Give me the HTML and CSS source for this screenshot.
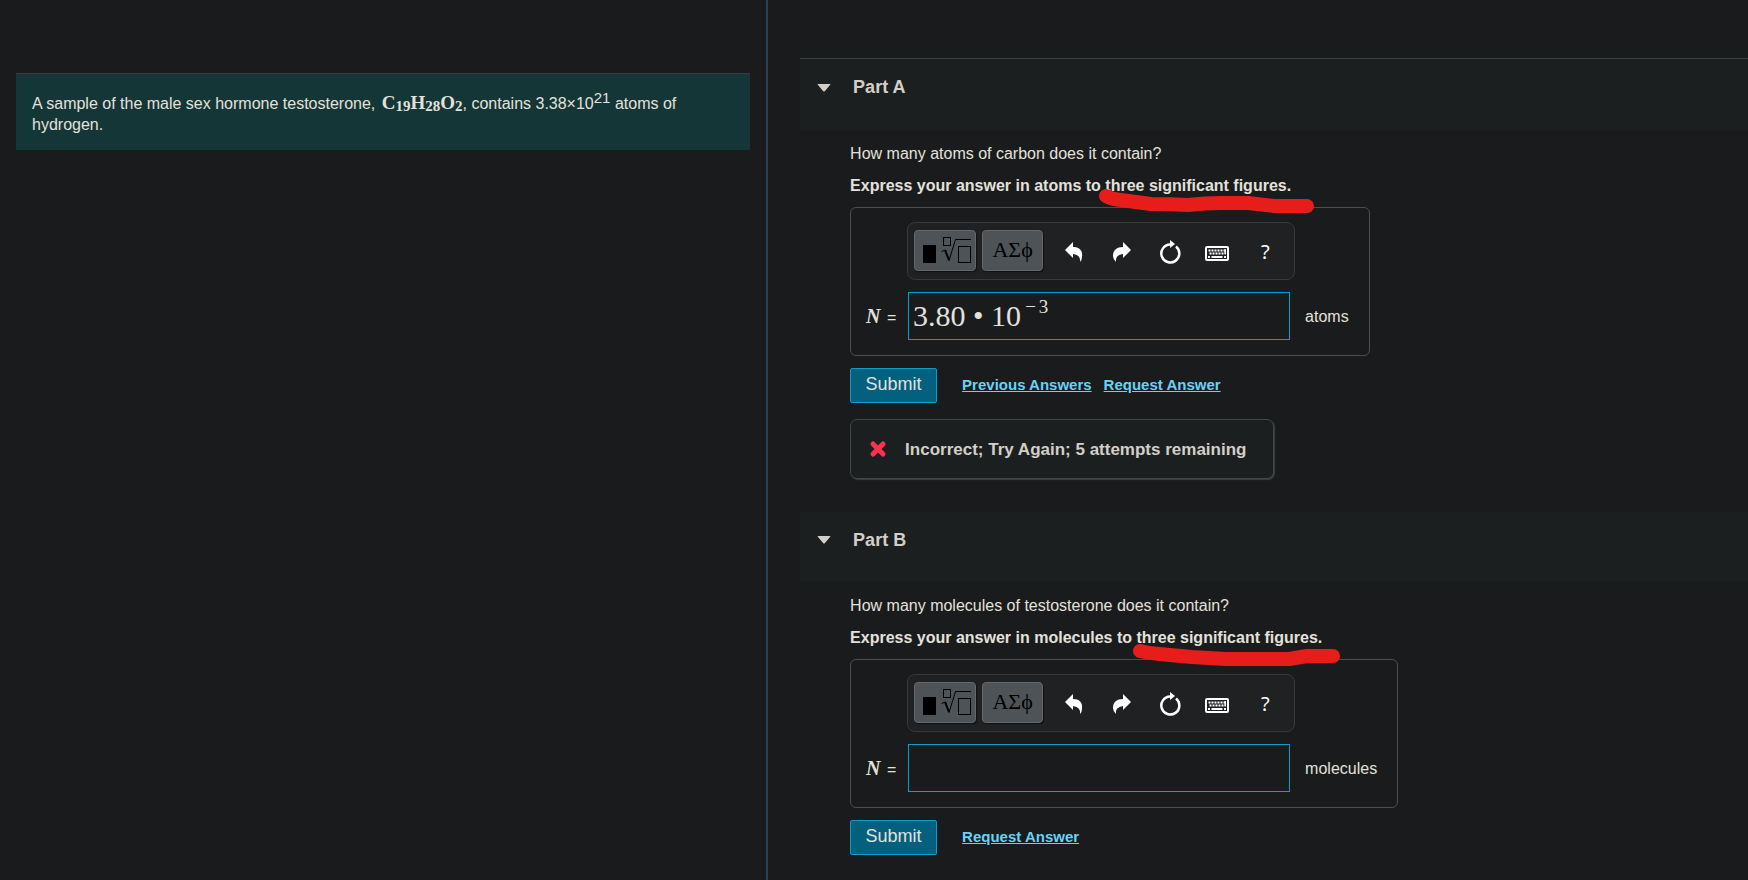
FILE: index.html
```html
<!DOCTYPE html>
<html lang="en">
<head>
  <meta charset="UTF-8" />
  <meta name="viewport" content="width=device-width, initial-scale=1.0"/>
  <title>Testosterone atoms</title>
  <link rel="stylesheet" href="styles.css">
</head>
<body>
  <!-- shared icons -->
  <svg class="icon-defs" aria-hidden="true">
    <symbol id="icon-template" viewBox="0 0 52 30">
      <rect x="4" y="10" width="13" height="18" fill="#000"/>
      <g fill="none" stroke="#000">
        <rect x="24.5" y="2.500" width="7" height="8"/>
        <path d="M22.500 16.500L26.500 15L30 25.500L36.500 4.500H52"/>
        <path d="M26 15L30 25" stroke-width="2"/>
        <rect x="39.500" y="11.500" width="12" height="16"/>
      </g>
    </symbol>
    <symbol id="icon-undo" viewBox="0 0 18 20">
      <path d="M0 8L8 0V5C14 5 18 8 17 15Q17 18 15 20Q16 13 8 12V16Z"/>
    </symbol>
    <symbol id="icon-redo" viewBox="0 0 18 20">
      <path d="M18 8L10 0V5C4 5 0 8 0 14Q0 17 3 20Q2 13 10 12V16Z"/>
    </symbol>
    <symbol id="icon-reset" viewBox="0 0 22 24">
      <path d="M11 4.500A9 9 0 1 0 17 6.500" fill="none" stroke="#fff" stroke-width="2.500"/>
      <path d="M11 0L16 4L11 8Z"/>
    </symbol>
    <symbol id="icon-keyboard" viewBox="0 0 24 15">
      <rect x="1" y="1" width="22" height="13" rx="1" fill="none" stroke="#fff" stroke-width="2"/>
      <path d="M3.500 4.500H20M4.500 7.500H21" fill="none" stroke="#fff" stroke-width="2" stroke-dasharray="2 1"/>
      <path d="M3 10H5V12H3ZM6.500 10H17.500V12H6.500ZM19 10H21V12H19ZM19.500 3H21V8H19.500Z"/>
    </symbol>
  </svg>

  <div class="page">
    <aside class="intro">
      <p class="problem">A sample of the male sex hormone testosterone, <span class="formula">C<sub>19</sub>H<sub>28</sub>O<sub>2</sub></span>, contains 3.38×10<sup>21</sup> atoms of hydrogen.</p>
    </aside>

    <main class="parts">
      <section class="part">
        <header class="part-header">
          <svg class="caret" viewBox="0 0 14 8"><path d="M1 0H13Q14 0 13 1L8 7Q7 8 6 7L1 1Q0 0 1 0Z"/></svg>
          <h2>Part A</h2>
        </header>
        <div class="part-body">
          <p>How many atoms of carbon does it contain?</p>
          <p class="instruction">Express your answer in atoms to <span class="marked">three significant figures.<svg class="marker" viewBox="0 0 230 32"><path d="M11 12Q16 15 26 16L56 20Q75 20 93 21Q110 19 126 19H153L179 22H212"/></svg></span></p>
          <form class="answer">
            <div class="toolbar">
              <button type="button" class="key" aria-label="Templates"><svg class="template"><use href="#icon-template"/></svg></button>
              <button type="button" class="key">ΑΣϕ</button>
              <button type="button" class="tool" aria-label="Undo"><svg class="arrow"><use href="#icon-undo"/></svg></button>
              <button type="button" class="tool" aria-label="Redo"><svg class="arrow"><use href="#icon-redo"/></svg></button>
              <button type="button" class="tool" aria-label="Reset"><svg class="reset"><use href="#icon-reset"/></svg></button>
              <button type="button" class="tool" aria-label="Keyboard shortcuts"><svg class="keyboard"><use href="#icon-keyboard"/></svg></button>
              <button type="button" class="tool">?</button>
            </div>
            <label for="answerA"><i>N</i> =</label>
            <div class="field">
              <input type="text" id="answerA" />
              <span class="math">3.80 • 10<sup><span class="sign">−</span>3</sup></span>
            </div>
            <span class="unit">atoms</span>
          </form>
          <div class="actions">
            <button type="button" class="submit">Submit</button>
            <a href="#">Previous Answers</a>
            <a href="#">Request Answer</a>
          </div>
          <div class="feedback">
            <svg class="cross" viewBox="0 0 18 18"><path d="M4 4L14 14M14 4L4 14"/></svg>
            Incorrect; Try Again; 5 attempts remaining
          </div>
        </div>
      </section>

      <section class="part">
        <header class="part-header">
          <svg class="caret" viewBox="0 0 14 8"><path d="M1 0H13Q14 0 13 1L8 7Q7 8 6 7L1 1Q0 0 1 0Z"/></svg>
          <h2>Part B</h2>
        </header>
        <div class="part-body">
          <p>How many molecules of testosterone does it contain?</p>
          <p class="instruction">Express your answer in molecules to <span class="marked">three significant figures.<svg class="marker" viewBox="0 0 230 32"><path d="M14 15Q22 17 33 18L66 21L100 23H163L181 20H207"/></svg></span></p>
          <form class="answer">
            <div class="toolbar">
              <button type="button" class="key" aria-label="Templates"><svg class="template"><use href="#icon-template"/></svg></button>
              <button type="button" class="key">ΑΣϕ</button>
              <button type="button" class="tool" aria-label="Undo"><svg class="arrow"><use href="#icon-undo"/></svg></button>
              <button type="button" class="tool" aria-label="Redo"><svg class="arrow"><use href="#icon-redo"/></svg></button>
              <button type="button" class="tool" aria-label="Reset"><svg class="reset"><use href="#icon-reset"/></svg></button>
              <button type="button" class="tool" aria-label="Keyboard shortcuts"><svg class="keyboard"><use href="#icon-keyboard"/></svg></button>
              <button type="button" class="tool">?</button>
            </div>
            <label for="answerB"><i>N</i> =</label>
            <div class="field">
              <input type="text" id="answerB" />
            </div>
            <span class="unit">molecules</span>
          </form>
          <div class="actions">
            <button type="button" class="submit">Submit</button>
            <a href="#">Request Answer</a>
          </div>
        </div>
      </section>
    </main>
  </div>
</body>
</html>
```

FILE: styles.css
```css
* {
  box-sizing: border-box;
}
body {
  margin: 0;
  background: #1a1b1d;
  color: #e4e1dc;
  font: 16px/21px "Liberation Sans", Arial, sans-serif;
}
p, h2 {
  margin: 0;
}
button {
  cursor: pointer;
  padding: 0;
}
.icon-defs {
  display: none;
}
.page {
  display: grid;
  grid-template-columns: calc(44% - 1px) 1fr;
  min-height: 100vh;
}

/* Left column */
.intro {
  padding: 73px 16px 0;
  border-right: 2px solid #2b4059;
}
.problem {
  padding: 19px 16px 15px;
  background: #143636;
  border-top: 1px solid #364040;
}
.problem sup {
  font-size: 15px;
  line-height: 0;
  vertical-align: 6px;
}
.formula {
  margin-left: 2px;
  font-family: "Liberation Serif", serif;
  font-size: 19px;
  font-weight: bold;
  line-height: 0;
}
.problem sub {
  font-size: 15px;
  line-height: 0;
  vertical-align: -2px;
}

/* Parts */
.parts {
  padding: 58px 0 24px 32px;
}
.part + .part {
  margin-top: 33px;
}
.part-header {
  display: flex;
  align-items: center;
  gap: 22px;
  height: 70px;
  padding: 0 17px 14px;
  background: #1c1f20;
}
.part:first-child .part-header {
  height: 72px;
  border-top: 1px solid #3b4041;
}
.part-header h2 {
  font-size: 18px;
  color: #d3cfc8;
}
.caret {
  width: 14px;
  height: 8px;
  fill: #d3cfc8;
}
.part-body {
  padding: 13px 16px 0 50px;
}
.instruction {
  margin: 11px 0;
  font-weight: bold;
}
.marked {
  position: relative;
}
/* red pen line under the words */
.marker {
  position: absolute;
  left: -10px;
  top: 7px;
  width: 230px;
  height: 32px;
  fill: none;
  stroke: #e71d1c;
  stroke-width: 14px;
  stroke-linecap: round;
  stroke-linejoin: round;
}
.answer {
  display: inline-grid;
  grid-template-columns: auto 382px auto;
  gap: 12px 0;
  align-items: center;
  padding: 14px 20px 15px 15px;
  border: 1px solid #4b4d50;
  border-radius: 6px;
  vertical-align: top;
}
.toolbar {
  grid-column: 2 / 4;
  justify-self: start;
  display: flex;
  align-items: center;
  width: 388px;
  height: 58px;
  margin-left: -1px;
  padding: 0 6px 2px;
  background: #202123;
  border: 1px solid #37393c;
  border-radius: 8px;
}
.key {
  display: flex;
  align-items: center;
  justify-content: center;
  width: 62px;
  height: 41px;
  margin-right: 6px;
  border: 1px solid #64686b;
  border-radius: 4px;
  background: #4d5357;
  color: #000;
  font: 22px "Liberation Serif", serif;
  box-shadow: 1px 1px 1px #111;
}
.tool {
  display: flex;
  align-items: center;
  justify-content: center;
  width: 48px;
  height: 41px;
  padding: 3px 0 0 2px;
  border: 0;
  background: none;
  color: #fff;
  font: 20px "Noto Sans", sans-serif;
}
.tool svg {
  fill: #fff;
}
.template {
  width: 52px;
  height: 30px;
}
.arrow {
  width: 18px;
  height: 20px;
}
.reset {
  width: 22px;
  height: 24px;
}
.keyboard {
  width: 24px;
  height: 15px;
  margin-top: 4px;
}
.answer label {
  width: 42px;
}
.answer label i {
  margin-right: 2px;
  font: italic bold 20px "Liberation Serif", serif;
}
.field {
  position: relative;
}
.field input {
  display: block;
  width: 100%;
  height: 48px;
  padding: 0 4px;
  border: 1px solid #0b9dcb;
  background: none;
  color: inherit;
  font: 30px "Liberation Serif", serif;
}
/* typeset value drawn over the input */
.math {
  position: absolute;
  left: 5px;
  top: 8px;
  font: 30px/32px "Liberation Serif", serif;
  pointer-events: none;
}
.math sup {
  margin-left: 4px;
  font-size: 19px;
  line-height: 0;
  vertical-align: 13px;
}
.sign {
  margin-right: 3px;
}
.unit {
  padding-left: 15px;
}
.actions {
  display: flex;
  align-items: center;
  margin-top: 12px;
}
.actions a {
  margin-right: 12px;
  padding-bottom: 3px;
  color: #65d4f6;
  font-size: 15px;
  font-weight: bold;
}
.submit {
  width: 87px;
  height: 35px;
  margin-right: 25px;
  padding-bottom: 2px;
  border: 1px solid #0b9dcb;
  border-radius: 2px;
  background: #03607e;
  color: #e4e1dc;
  font: 18px "Liberation Sans", Arial, sans-serif;
}
.feedback {
  display: flex;
  align-items: center;
  gap: 18px;
  width: fit-content;
  height: 60px;
  margin-top: 16px;
  padding: 0 27px 0 18px;
  background: #1c1f20;
  border: 1px solid #414748;
  border-radius: 7px;
  box-shadow: 1px 1px 1px #3a4242;
  color: #d3cfc8;
  font-size: 17px;
  font-weight: bold;
}
.cross {
  width: 18px;
  height: 18px;
  stroke: #ff2f4f;
  stroke-width: 5px;
  stroke-linecap: round;
}
```
